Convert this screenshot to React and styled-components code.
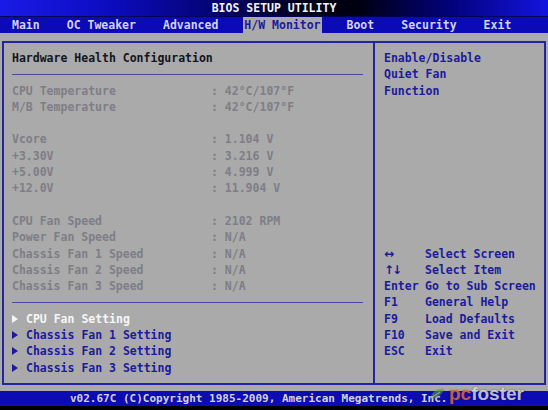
import React from 'react';
import styled, { createGlobalStyle } from 'styled-components';

const ROW = '16.3px';

const Global = createGlobalStyle`
  html, body { margin: 0; padding: 0; background: #000; }
  body { font-family: "DejaVu Sans Mono", "Liberation Mono", monospace; }
`;

const Screen = styled.div`
  position: relative;
  width: 548px;
  height: 410px;
  display: flex;
  flex-direction: column;
  overflow: hidden;
  font-family: "DejaVu Sans Mono", "Liberation Mono", monospace;
  font-weight: bold;
  font-size: 11.5px;
`;

const TitleBar = styled.div`
  height: 16px;
  border-bottom: 1px solid #00005a;
  background: linear-gradient(90deg, #1a1ae8 0%, #0c0cc0 20%, #030370 40%, #000018 55%, #000010 65%, #02027a 82%, #1414e0 100%);
  color: #f4f4f4;
  display: flex;
  align-items: center;
  justify-content: center;
  line-height: 16px;
`;

const MenuBar = styled.div`
  height: 16px;
  background: #0a0ab6;
  display: flex;
  align-items: stretch;
  gap: 25px;
  padding-left: 11px;
`;

const Tab = styled.div`
  padding: 0 1px;
  display: flex;
  align-items: center;
  color: ${p => (p.$active ? '#1b1b9c' : '#d4d4ee')};
  background: ${p => (p.$active ? '#aaaaaa' : 'transparent')};
  margin: ${p => (p.$active ? '0 -1px 0 -1px' : '0')};
`;

const Body = styled.div`
  flex: 1;
  background: #aaaaaa;
  padding: 8px 2px 6px 2px;
  display: flex;
`;

const Frame = styled.div`
  flex: 1;
  border: 2px solid #2424a0;
  display: grid;
  grid-template-columns: 369px 1fr;
`;

const LeftPanel = styled.div`
  padding: 7px 10px 0 8px;
  line-height: ${ROW};
`;

const RightPanel = styled.div`
  border-left: 2px solid #2424a0;
  padding: 7px 0 0 9px;
  line-height: ${ROW};
  color: #1b1b9c;
`;

const Heading = styled.div`
  height: ${ROW};
  color: #14141e;
`;

const Rule = styled.div`
  height: ${ROW};
  display: flex;
  align-items: center;
  &::before {
    content: '';
    flex: 1;
    height: 1px;
    background: #4848a4;
  }
`;

const Gap = styled.div`
  height: ${ROW};
`;

const InfoRow = styled.div`
  height: ${ROW};
  display: grid;
  grid-template-columns: 199px 1fr;
  color: #7e7e87;
  white-space: pre;
`;

const SubItem = styled.div`
  height: ${ROW};
  display: flex;
  align-items: center;
  color: ${p => (p.$selected ? '#f6f6f6' : '#1b1b9c')};
`;

const Pointer = styled.span`
  width: 0;
  height: 0;
  border-left: 6px solid currentColor;
  border-top: 4px solid transparent;
  border-bottom: 4px solid transparent;
  margin-right: 8px;
`;

const HelpLine = styled.div`
  height: ${ROW};
`;

const KeyList = styled.div`
  margin-top: calc(9 * ${ROW});
  display: grid;
  grid-template-columns: 41px 1fr;
  grid-auto-rows: ${ROW};
`;

const Key = styled.span`
  font-family: ${p => (p.$glyph ? '"DejaVu Sans", sans-serif' : 'inherit')};
  font-size: ${p => (p.$glyph ? '12px' : 'inherit')};
  letter-spacing: ${p => (p.$glyph ? '-2px' : '0')};
  line-height: ${ROW};
`;

const Footer = styled.div`
  height: 15px;
  background: #0c0cb2;
  color: #d2d2dc;
  font-size: 11px;
  line-height: 15px;
  padding-left: 70px;
  white-space: pre;
`;

const BottomStrip = styled.div`
  height: 4px;
  background: #000;
`;

const Watermark = styled.div`
  position: absolute;
  left: 428px;
  top: 383px;
  display: flex;
  align-items: center;
  gap: 3px;
  font-family: "Liberation Sans", Arial, sans-serif;
  font-size: 19px;
  font-weight: bold;
  opacity: 0.85;
  pointer-events: none;
`;

const Brand = styled.span`
  color: ${p => p.$tone};
  text-shadow: 0 0 2px rgba(0, 0, 0, 0.5);
`;

const readings = [
  ['CPU Temperature', '42°C/107°F'],
  ['M/B Temperature', '42°C/107°F'],
  null,
  ['Vcore', '1.104 V'],
  ['+3.30V', '3.216 V'],
  ['+5.00V', '4.999 V'],
  ['+12.0V', '11.904 V'],
  null,
  ['CPU Fan Speed', '2102 RPM'],
  ['Power Fan Speed', 'N/A'],
  ['Chassis Fan 1 Speed', 'N/A'],
  ['Chassis Fan 2 Speed', 'N/A'],
  ['Chassis Fan 3 Speed', 'N/A'],
];

const subMenus = ['CPU Fan Setting', 'Chassis Fan 1 Setting', 'Chassis Fan 2 Setting', 'Chassis Fan 3 Setting'];

const keys = [
  ['↔', 'Select Screen', true],
  ['↑↓', 'Select Item', true],
  ['Enter', 'Go to Sub Screen'],
  ['F1', 'General Help'],
  ['F9', 'Load Defaults'],
  ['F10', 'Save and Exit'],
  ['ESC', 'Exit'],
];

const tabs = ['Main', 'OC Tweaker', 'Advanced', 'H/W Monitor', 'Boot', 'Security', 'Exit'];

const Leaf = () => (
  <svg width="18" height="14" viewBox="0 0 18 14">
    <path d="M2 12 C4 4 10 1 16 2 C14 8 9 12 2 12 Z" fill="#5a9a4a" opacity="0.7" />
    <path d="M3 11 L12 5" stroke="#b8d8a8" strokeWidth="1" />
  </svg>
);

export default function App() {
  return (
    <>
      <Global />
      <Screen>
        <TitleBar>BIOS SETUP UTILITY</TitleBar>
        <MenuBar>
          {tabs.map(t => (
            <Tab key={t} $active={t === 'H/W Monitor'}>{t}</Tab>
          ))}
        </MenuBar>
        <Body>
          <Frame>
            <LeftPanel>
              <Heading>Hardware Health Configuration</Heading>
              <Rule />
              {readings.map((r, i) =>
                r ? (
                  <InfoRow key={i}>
                    <span>{r[0]}</span>
                    <span>{': ' + r[1]}</span>
                  </InfoRow>
                ) : (
                  <Gap key={i} />
                )
              )}
              <Rule />
              {subMenus.map((s, i) => (
                <SubItem key={s} $selected={i === 0}>
                  <Pointer />
                  {s}
                </SubItem>
              ))}
            </LeftPanel>
            <RightPanel>
              <HelpLine>Enable/Disable</HelpLine>
              <HelpLine>Quiet Fan</HelpLine>
              <HelpLine>Function</HelpLine>
              <KeyList>
                {keys.map(([k, d, g]) => (
                  <React.Fragment key={k}>
                    <Key $glyph={g}>{k}</Key>
                    <span>{d}</span>
                  </React.Fragment>
                ))}
              </KeyList>
            </RightPanel>
          </Frame>
        </Body>
        <Footer>v02.67C (C)Copyright 1985-2009, American Megatrends, Inc.</Footer>
        <BottomStrip />
        <Watermark>
          <Leaf />
          <span>
            <Brand $tone="#e0683a">pc</Brand>
            <Brand $tone="#d8d8d8">foster</Brand>
          </span>
        </Watermark>
      </Screen>
    </>
  );
}
